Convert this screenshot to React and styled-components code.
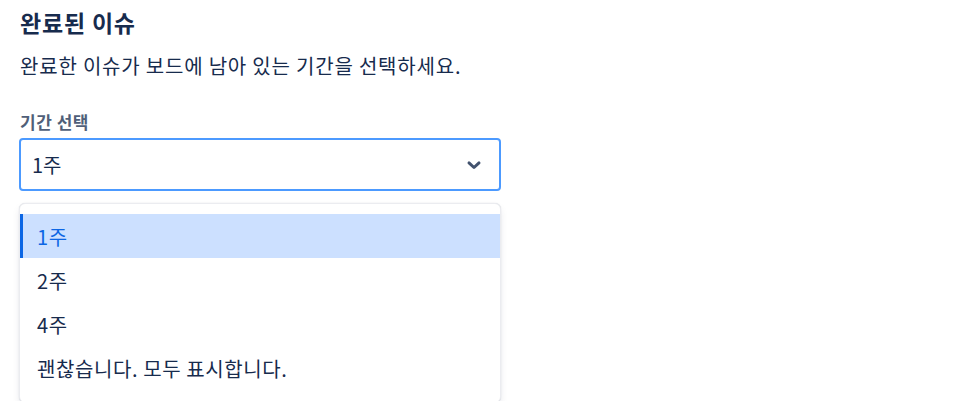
import React, { useState } from "react";
import styled, { createGlobalStyle } from "styled-components";

const GlobalStyle = createGlobalStyle`
  body {
    margin: 0;
    background: #ffffff;
    font-family: "Noto Sans CJK KR", "Noto Sans", sans-serif;
    color: #172b4d;
  }
`;

const options = ["1주", "2주", "4주", "괜찮습니다. 모두 표시합니다."];

const App = () => {
  const [selected, setSelected] = useState(options[0]);

  return (
    <>
      <GlobalStyle />
      <StyledPage>
        <StyledHeading>완료된 이슈</StyledHeading>
        <StyledDescription>완료한 이슈가 보드에 남아 있는 기간을 선택하세요.</StyledDescription>
        <StyledLabel>기간 선택</StyledLabel>
        <StyledSelect>
          <span>{selected}</span>
          <svg width="20" height="20" viewBox="0 0 24 24">
            <path
              d="M6 9.5l6 5.5 6-5.5"
              fill="none"
              stroke="#42526e"
              strokeWidth="3.6"
              strokeLinecap="round"
              strokeLinejoin="round"
            />
          </svg>
        </StyledSelect>
        <StyledMenu>
          {options.map((option) => (
            <StyledOption
              key={option}
              $active={option === selected}
              onClick={() => setSelected(option)}
            >
              {option}
            </StyledOption>
          ))}
        </StyledMenu>
      </StyledPage>
    </>
  );
};

const StyledPage = styled.div`
  display: flex;
  flex-direction: column;
  width: 482px;
  padding: 8px 0 0 19px;
`;

const StyledHeading = styled.h2`
  margin: 0 0 0 1px;
  font-size: 23px;
  line-height: 28px;
  font-weight: 700;
  letter-spacing: 0.8px;
  color: #172b4d;
`;

const StyledDescription = styled.p`
  margin: 16px 0 0 1px;
  font-size: 20px;
  line-height: 28px;
  letter-spacing: 0.8px;
  color: #172b4d;
`;

const StyledLabel = styled.label`
  margin: 30px 0 0 1px;
  font-size: 17px;
  line-height: 24px;
  font-weight: 700;
  letter-spacing: 0.5px;
  color: #505f79;
`;

const StyledSelect = styled.div`
  margin-top: 4px;
  height: 53px;
  box-sizing: border-box;
  border: 2px solid #4c9aff;
  border-radius: 4px;
  display: flex;
  align-items: center;
  justify-content: space-between;
  padding: 0 15px 0 11px;
  font-size: 20px;
  color: #172b4d;
`;

const StyledMenu = styled.div`
  margin-top: 12px;
  padding: 10px 0 12px;
  border-radius: 6px;
  background: #ffffff;
  border: 1px solid #ebecf0;
  box-shadow: 0 4px 8px -2px rgba(9, 30, 66, 0.15), 0 0 1px rgba(9, 30, 66, 0.2);
  display: flex;
  flex-direction: column;
`;

const StyledOption = styled.div`
  height: 44px;
  display: flex;
  align-items: center;
  padding-left: ${(p) => (p.$active ? "14px" : "16px")};
  border-left: ${(p) => (p.$active ? "3px solid #0c66e4" : "0")};
  margin-left: ${(p) => (p.$active ? "0" : "1px")};
  background: ${(p) => (p.$active ? "#cce0ff" : "transparent")};
  color: ${(p) => (p.$active ? "#0c66e4" : "#172b4d")};
  font-size: 20px;
  letter-spacing: 0.6px;
  cursor: pointer;
`;

export default App;
